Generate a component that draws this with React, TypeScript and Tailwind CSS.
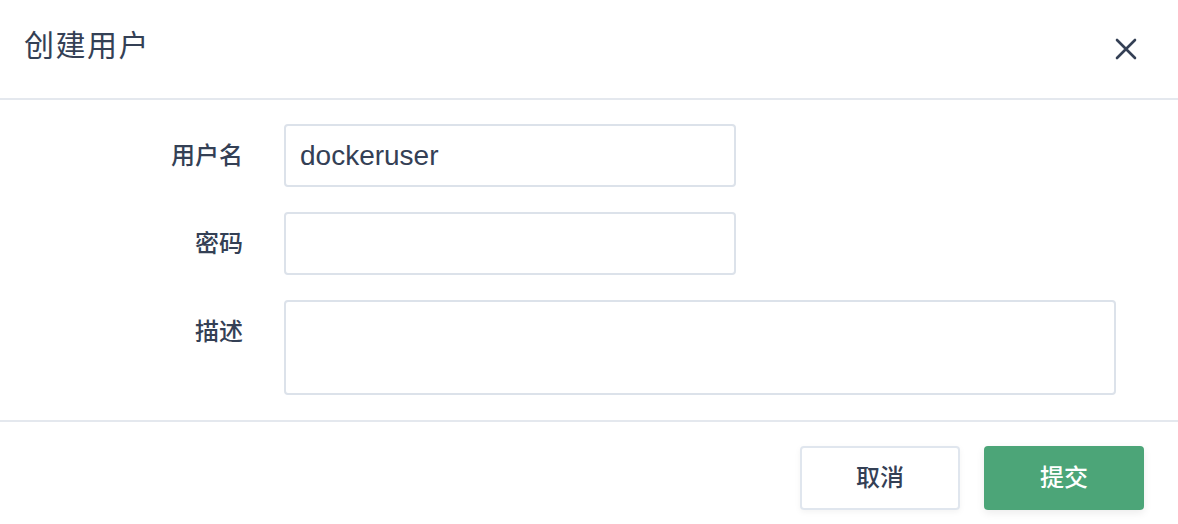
import React from 'react';

const font = { fontFamily: '"Liberation Sans", "Noto Sans CJK SC", sans-serif' };

const FormRow: React.FC<{ label: string; children: React.ReactNode }> = ({ label, children }) => (
  <div className="flex items-start gap-[41px]">
    <label className="w-[243px] h-[63px] shrink-0 flex items-center justify-end text-[24px] font-medium text-[#344055]">
      {label}
    </label>
    {children}
  </div>
);

export default function App() {
  return (
    <div className="w-[1178px] h-[524px] bg-white flex flex-col text-[#344055]" style={font}>
      <header className="h-[100px] shrink-0 flex items-center justify-between pl-6 pr-[40px] pb-[8px] border-b-2 border-[#e4e8ee]">
        <h2 className="text-[30px] font-normal tracking-[1.5px]">创建用户</h2>
        <button className="w-[24px] h-[24px] flex items-center justify-center mt-[8px]">
          <svg width="22" height="22" viewBox="0 0 22 22" fill="none" stroke="#344055" strokeWidth="2.6" strokeLinecap="round">
            <path d="M2 2L20 20M20 2L2 20" />
          </svg>
        </button>
      </header>

      <div className="flex flex-col gap-[25px] pt-6 pb-[25px] pr-[62px] border-b-2 border-[#e4e8ee]">
        <FormRow label="用户名">
          <input
            defaultValue="dockeruser"
            className="w-[452px] h-[63px] border-2 border-[#dce2ea] rounded-[4px] px-[14px] text-[28px] text-[#344055] outline-none"
            style={font}
          />
        </FormRow>
        <FormRow label="密码">
          <input
            type="password"
            className="w-[452px] h-[63px] border-2 border-[#dce2ea] rounded-[4px] px-[14px] text-[28px] outline-none"
          />
        </FormRow>
        <FormRow label="描述">
          <textarea className="flex-1 h-[95px] border-2 border-[#dce2ea] rounded-[4px] px-[14px] py-2 text-[28px] outline-none resize-none" />
        </FormRow>
      </div>

      <footer className="flex justify-end gap-6 pt-6 pr-[34px]">
        <button className="w-[160px] h-[64px] border-2 border-[#e0e6ee] rounded-[4px] bg-white text-[24px] font-medium text-[#344055] shadow-[0_2px_6px_rgba(0,0,0,0.05)]">
          取消
        </button>
        <button className="w-[160px] h-[64px] rounded-[4px] bg-[#4ca578] text-[24px] font-medium text-white shadow-[0_3px_8px_rgba(0,0,0,0.08)]">
          提交
        </button>
      </footer>
    </div>
  );
}
